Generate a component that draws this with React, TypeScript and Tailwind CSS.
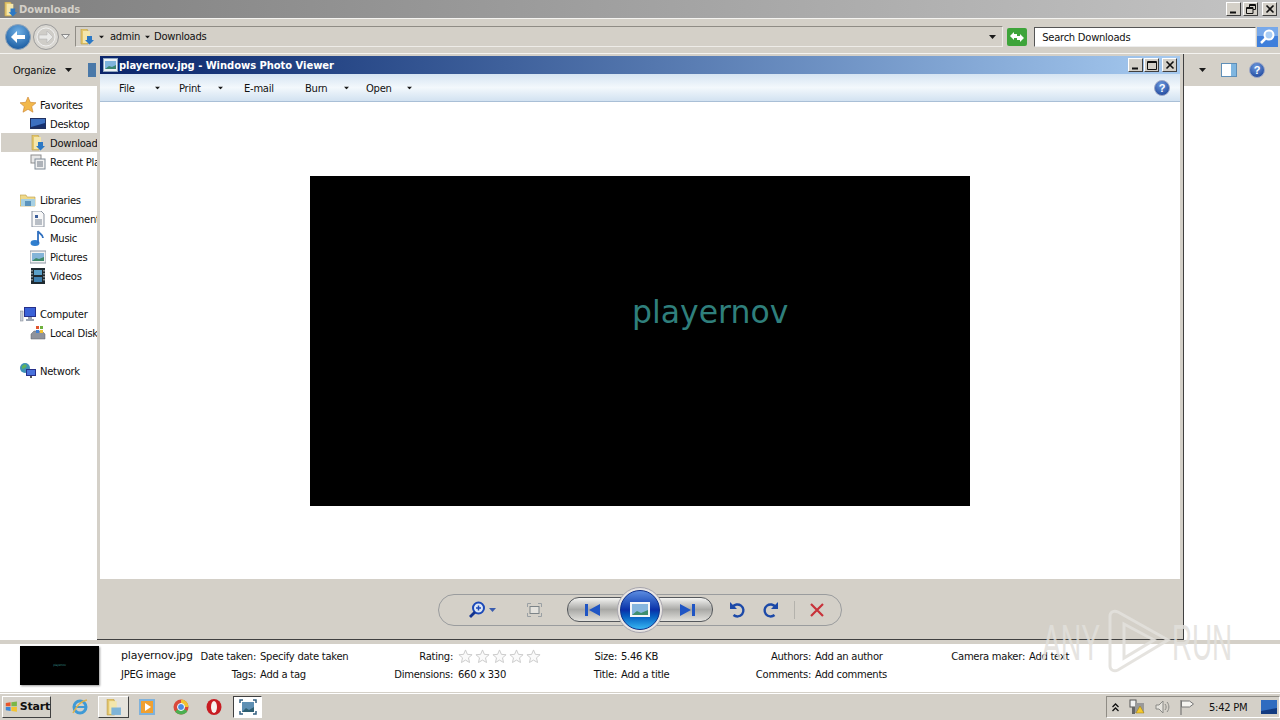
import React from "react";

const FONT = "[font-family:'DejaVu_Sans','Liberation_Sans',sans-serif]";

function Caret({ className = "" }: { className?: string }) {
  return (
    <svg width="7" height="4" viewBox="0 0 7 4" className={className}>
      <path d="M0 0h7L3.500 4z" fill="#1a1a1a" />
    </svg>
  );
}

function FolderIcon({ size = 16, arrow = false }: { size?: number; arrow?: boolean }) {
  return (
    <svg width={size} height={size} viewBox="0 0 16 16">
      <path d="M2 0h6l1 2v13H2z" fill="#e3c66d" stroke="#b99a45" strokeWidth=".6" />
      <path d="M4 2h7v12H4z" fill="#f4e6ab" />
      {arrow ? <path d="M8 7h5v4h2l-4.500 4.500L6 11h2z" fill="#2b78c5" /> : <path d="M6 8h9v7H6z" fill="#7fb4d8" />}
    </svg>
  );
}

function HelpIcon({ size = 16 }: { size?: number }) {
  return (
    <svg width={size} height={size} viewBox="0 0 16 16">
      <defs>
        <radialGradient id="hg" cx=".45" cy=".3" r=".8">
          <stop offset="0" stopColor="#6f9be0" />
          <stop offset="1" stopColor="#173f95" />
        </radialGradient>
      </defs>
      <circle cx="8" cy="8" r="7.500" fill="url(#hg)" stroke="#9fa9c7" />
      <text x="8" y="12" textAnchor="middle" fontSize="11" fontWeight="700" fill="#fff" fontFamily="Liberation Sans">?</text>
    </svg>
  );
}

function SideIcon({ kind }: { kind: string }) {
  const c = { width: 16, height: 16, viewBox: "0 0 16 16" };
  switch (kind) {
    case "star":
      return <svg {...c}><path d="M8 0l2.300 5.300 5.700.5-4.300 3.800 1.300 5.600L8 12.300 3 15.200l1.300-5.600L0 5.800l5.700-.5z" fill="#f2b84b" stroke="#c9802b" strokeWidth=".6" /></svg>;
    case "desktop":
      return <svg {...c}><rect x="0" y="2" width="16" height="11" fill="#20305f" /><rect x="1" y="3" width="14" height="8" fill="#3d70c0" /><path d="M1 11l14-4v4z" fill="#16306f" /></svg>;
    case "downloads":
      return <FolderIcon arrow />;
    case "recent":
      return <svg {...c}><rect x="1" y="1" width="10" height="8" fill="#e8e8e8" stroke="#8d8d8d" /><rect x="5" y="5" width="10" height="10" fill="#f1f1f1" stroke="#7f8a95" /><path d="M7 8h6M7 10h6M7 12h6" stroke="#6a7580" /></svg>;
    case "libraries":
      return <svg {...c}><path d="M0 3h6l1 2h8v9H0z" fill="#efd98a" stroke="#b99a45" strokeWidth=".6" /><path d="M1 7h14v7H1z" fill="#a6cfe2" /><path d="M5 9h6v5H5z" fill="#5b93bd" /></svg>;
    case "documents":
      return <svg {...c}><path d="M2 0h9l3 3v13H2z" fill="#f8f8f8" stroke="#8a93a0" /><path d="M5 4h3v3H5z" fill="#3d5f9a" /><path d="M5 9h7M5 11h7M5 13h7" stroke="#7a8594" /></svg>;
    case "music":
      return <svg {...c}><ellipse cx="5" cy="13" rx="4.500" ry="3" fill="#2f7fcf" /><path d="M8 13V1c1 3 5 3 5 7" stroke="#2f6fbf" strokeWidth="1.800" fill="none" /></svg>;
    case "pictures":
      return <svg {...c}><rect x="0" y="2" width="16" height="12" fill="#f3f3f3" stroke="#8f98a5" /><rect x="2" y="4" width="12" height="8" fill="#84b4d8" /><path d="M2 12l4-3 3 1 5-2v4z" fill="#3f8a6a" /></svg>;
    case "videos":
      return <svg {...c}><rect x="1" y="0" width="14" height="16" fill="#1f2a30" /><rect x="4" y="2" width="8" height="5" fill="#5ba0c8" /><rect x="4" y="9" width="8" height="5" fill="#3f80b0" /><path d="M2 2v12M14 2v12" stroke="#dfe6ea" strokeDasharray="1.500 1.500" /></svg>;
    case "computer":
      return <svg {...c}><rect x="0" y="5" width="3" height="10" fill="#c9ced6" stroke="#7a818c" strokeWidth=".5" /><rect x="4" y="1" width="12" height="10" fill="#26308a" /><rect x="5" y="2" width="10" height="8" fill="#3a62d8" /><path d="M8 11h4v2h2v2H6v-2h2z" fill="#9aa3b2" /></svg>;
    case "disk":
      return <svg {...c}><path d="M1 9l3-3h8l3 3v5H1z" fill="#8f939c" stroke="#5e6169" strokeWidth=".5" /><rect x="6" y="1" width="3" height="3" fill="#e2552d" /><rect x="10" y="1" width="3" height="3" fill="#6fb13d" /><rect x="6" y="5" width="3" height="3" fill="#3f7fd6" /><rect x="10" y="5" width="3" height="3" fill="#f2c230" /></svg>;
    case "network":
      return <svg {...c}><circle cx="5" cy="5" r="5" fill="#3f92b6" /><path d="M2 3l3-2 2 2-2 2-3 1z" fill="#5eb35a" /><rect x="6" y="6" width="10" height="7" fill="#26308a" /><rect x="7" y="7" width="8" height="5" fill="#4a72dc" /><path d="M10 13h2v2h-2z" fill="#555" /></svg>;
  }
  return null;
}

function SideRow({ icon, label, sub, active }: { icon: string; label: string; sub?: boolean; active?: boolean }) {
  return (
    <div className={`flex h-[19px] items-center whitespace-nowrap overflow-hidden ${sub ? "pl-[30px]" : "pl-[20px]"} ${active ? "bg-[#d4d0c8] ml-px" : ""}`}>
      <span className={`flex w-[20px] shrink-0 ${active ? "-ml-px" : ""}`}>
        <SideIcon kind={icon} />
      </span>
      <span className="pt-px">{label}</span>
    </div>
  );
}

function WinBtn({ kind, className = "" }: { kind: "min" | "max" | "restore" | "close"; className?: string }) {
  return (
    <div className={`flex h-[14px] w-[15px] items-center justify-center border border-t-white border-l-white border-r-[#404040] border-b-[#404040] bg-[#d4d0c8] ${className}`}>
      <svg width="10" height="10" viewBox="0 0 10 10">
        {kind === "min" && <path d="M1 7.500h6v2H1z" fill="#111" />}
        {kind === "max" && <path d="M.5 1.500h9v8h-9zM.5 2.500h9" fill="none" stroke="#111" />}
        {kind === "restore" && <path d="M3.500 3V.5h6v5H7M.5 3.500h6.500v6H.5zM.5 4.500H7M3.500 1.500h6" fill="none" stroke="#111" />}
        {kind === "close" && <path d="M1.500 1.500l7 7M8.500 1.500l-7 7" stroke="#111" strokeWidth="1.600" />}
      </svg>
    </div>
  );
}

function MenuItem({ label, textW, total, caret = true }: { label: string; textW: number; total: number; caret?: boolean }) {
  return (
    <div className="flex items-center" style={{ width: total }}>
      <span className="pt-px" style={{ width: textW }}>{label}</span>
      {caret && <Caret className="scale-75" />}
    </div>
  );
}

function Stars() {
  return (
    <div className="flex gap-[2px]">
      {[0, 1, 2, 3, 4].map((i) => (
        <svg key={i} width="15" height="15" viewBox="0 0 16 16">
          <path d="M8 1l2 4.700 5 .4-3.800 3.300 1.100 5L8 11.800l-4.300 2.600 1.100-5L1 6.100l5-.4z" fill="#fafafa" stroke="#c9c9c9" />
        </svg>
      ))}
    </div>
  );
}

function DetailCol({ width, labelW, gap, rows }: { width: number; labelW: number; gap: number; rows: [string, React.ReactNode][] }) {
  return (
    <div className="flex flex-col" style={{ width }}>
      {rows.map(([l, v]) => (
        <div key={l} className="flex h-[18px] items-center whitespace-nowrap">
          <span className="text-right" style={{ width: labelW, marginRight: gap }}>{l}</span>
          {v}
        </div>
      ))}
    </div>
  );
}

function Explorer() {
  return (
    <div className="flex h-[694px] flex-col">
      <div className="flex h-[18px] items-center justify-between bg-gradient-to-r from-[#808080] to-[#c4c4c4] pl-[3px] pr-[3px]">
        <div className="flex items-center gap-[1px] text-[10px] font-bold tracking-[-.06px] text-[#d4d0c8]">
          <FolderIcon size={15} arrow />
          <span className="pt-px">Downloads</span>
        </div>
        <div className="flex">
          <WinBtn kind="min" className="mr-[2px]" />
          <WinBtn kind="restore" className="mr-[4px]" />
          <WinBtn kind="close" />
        </div>
      </div>
      <div className="flex h-[36px] items-center border-y border-[#f4f3f0] bg-[#d4d0c8] pl-[5px] pr-[2px] pt-px">
        <svg width="26" height="26" viewBox="0 0 26 26">
          <defs>
            <radialGradient id="bk" cx=".5" cy=".3" r=".8">
              <stop offset="0" stopColor="#6fb0e6" />
              <stop offset="1" stopColor="#0e4f96" />
            </radialGradient>
          </defs>
          <circle cx="13" cy="13" r="12.500" fill="url(#bk)" stroke="#8fa3b8" />
          <path d="M6 13l6-6v4h8v4h-8v4z" fill="#fff" />
        </svg>
        <svg width="26" height="26" viewBox="0 0 26 26" className="ml-[2px]">
          <circle cx="13" cy="13" r="12.500" fill="#d9d7d2" stroke="#9a9a9a" />
          <circle cx="13" cy="13" r="9" fill="#cfcdc8" stroke="#efefef" />
          <path d="M20 13l-6-6v4H6v4h8v4z" fill="#e9e9e7" stroke="#aeaeae" strokeWidth=".5" />
        </svg>
        <svg width="9" height="6" viewBox="0 0 9 6" className="ml-[2px]">
          <path d="M.5.500h8L4.500 5z" fill="#f2f2f0" stroke="#8a8a8a" />
        </svg>
        <div className="ml-[5px] flex h-[21px] w-[929px] items-center border border-l-[#8f8c85] border-t-[#8f8c85] border-r-[#eeece8] border-b-[#eeece8] pl-[3px]">
          <FolderIcon size={16} arrow />
          <Caret className="ml-[3px] scale-75" />
          <span className="ml-[5px]">admin</span>
          <Caret className="ml-[4px] scale-75" />
          <span className="ml-[3px]">Downloads</span>
          <Caret className="ml-auto mr-[6px]" />
        </div>
        <svg width="20" height="18" viewBox="0 0 20 18" className="ml-[4px]">
          <rect width="20" height="18" rx="2" fill="#3ea43a" />
          <path d="M3 8l4-4v2h3v4H7v2zM17 10l-4 4v-2h-3V8h3V6z" fill="#fff" />
        </svg>
        <div className="ml-[7px] flex h-[20px] w-[222px] items-center border border-l-[#555] border-t-[#555] border-r-[#eee] border-b-[#eee] bg-white pl-[7px] pt-px">Search Downloads</div>
        <svg width="21" height="20" viewBox="0 0 21 20" className="ml-px">
          <rect width="21" height="20" fill="#3f7fdb" />
          <rect width="21" height="9" fill="#78a9ea" />
          <circle cx="12" cy="8" r="4.500" fill="#a9cdf5" stroke="#fff" strokeWidth="2" />
          <path d="M8.500 11.500L4 16" stroke="#fff" strokeWidth="2.500" />
        </svg>
      </div>
      <div className="flex h-[32px] items-center bg-[#d4d0c8] pl-[13px] pr-[15px]">
        <span className="pt-px">Organize</span>
        <Caret className="ml-[9px]" />
        <svg width="8" height="14" viewBox="0 0 8 14" className="ml-[16px]">
          <rect width="8" height="14" fill="#4a78a8" />
        </svg>
        <Caret className="ml-auto" />
        <svg width="16" height="14" viewBox="0 0 16 14" className="ml-[15px]">
          <rect x=".5" y=".5" width="15" height="13" fill="#fff" stroke="#5f8fb8" />
          <rect x="10" y="1" width="5" height="12" fill="#7fb6e0" />
        </svg>
        <span className="ml-[12px] flex"><HelpIcon size={16} /></span>
      </div>
      <div className="flex min-h-0 flex-1 bg-white">
        <div className="w-[97px] overflow-hidden pt-[9px]">
          <SideRow icon="star" label="Favorites" />
          <SideRow icon="desktop" label="Desktop" sub />
          <SideRow icon="downloads" label="Downloads" sub active />
          <SideRow icon="recent" label="Recent Places" sub />
          <div className="h-[19px]" />
          <SideRow icon="libraries" label="Libraries" />
          <SideRow icon="documents" label="Documents" sub />
          <SideRow icon="music" label="Music" sub />
          <SideRow icon="pictures" label="Pictures" sub />
          <SideRow icon="videos" label="Videos" sub />
          <div className="h-[19px]" />
          <SideRow icon="computer" label="Computer" />
          <SideRow icon="disk" label="Local Disk (C:)" sub />
          <div className="h-[19px]" />
          <SideRow icon="network" label="Network" />
        </div>
      </div>
      <div className="h-[4px] bg-[#d4d0c8]" />
      <div className="flex h-[48px] items-start bg-white pt-[3px]">
        <div className="-mt-[1px] ml-[20px] mr-[22px] flex h-[39px] w-[79px] items-center justify-center bg-black text-[3px] text-[#2f7f7c] shadow-[1px_1px_2px_#999]">playernov</div>
        <div className="flex w-[75px] flex-col whitespace-nowrap">
          <span className="flex h-[18px] items-center text-[11px] tracking-[-.2px]">playernov.jpg</span>
          <span className="flex h-[18px] items-center">JPEG image</span>
        </div>
        <DetailCol width={198} labelW={60} gap={4} rows={[["Date taken:", "Specify date taken"], ["Tags:", "Add a tag"]]} />
        <DetailCol width={174} labelW={59} gap={5} rows={[["Rating:", <Stars key="s" />], ["Dimensions:", "660 x 330"]]} />
        <DetailCol width={153} labelW={49} gap={4} rows={[["Size:", "5.46 KB"], ["Title:", "Add a title"]]} />
        <DetailCol width={194} labelW={90} gap={4} rows={[["Authors:", "Add an author"], ["Comments:", "Add comments"]]} />
        <DetailCol width={220} labelW={110} gap={4} rows={[["Camera maker:", "Add text"]]} />
      </div>
      <div className="h-[1px] bg-[#d4d0c8]" />
      <div className="h-[1px] bg-white" />
    </div>
  );
}

function Viewer() {
  return (
    <div className="absolute left-[97px] top-[54px] flex h-[586px] w-[1087px] flex-col border-r border-b border-r-[#404040] border-b-[#404040] bg-[#d4d0c8] pl-[3px] pt-[2px]">
      <div className="mr-[3px] flex h-[18px] shrink-0 items-center justify-between bg-gradient-to-r from-[#0a246a] to-[#a6caf0] pl-[3px] pr-[3px]">
        <div className="flex items-center gap-[1px] text-[10px] font-bold tracking-[-.06px] text-white">
          <svg width="15" height="14" viewBox="0 0 15 14">
            <rect x=".5" y=".5" width="14" height="13" fill="#eef2f6" stroke="#8fa7c0" />
            <rect x="2" y="3" width="11" height="8" fill="#7fb4dd" />
            <path d="M2 11l4-3 3 1 4-2v4z" fill="#3a8670" />
          </svg>
          <span className="pt-px">playernov.jpg - Windows Photo Viewer</span>
        </div>
        <div className="flex">
          <WinBtn kind="min" className="mr-px" />
          <WinBtn kind="max" className="mr-[3px]" />
          <WinBtn kind="close" />
        </div>
      </div>
      <div className="mr-[3px] flex h-[28px] shrink-0 items-center border-b border-[#a9bfd6] bg-gradient-to-b from-[#d5e4f2] via-[#f3f8fc] to-[#d2e2f1] pl-[19px] pr-[10px]">
        <MenuItem label="File" textW={35} total={60} />
        <MenuItem label="Print" textW={38} total={65} />
        <MenuItem label="E-mail" textW={40} total={61} caret={false} />
        <MenuItem label="Burn" textW={38} total={61} />
        <MenuItem label="Open" textW={40} total={60} />
        <span className="ml-auto flex"><HelpIcon size={16} /></span>
      </div>
      <div className="mr-[3px] flex min-h-0 flex-1 items-center justify-center bg-white">
        <div className="h-[330px] w-[660px] bg-black pl-[322px] pt-[116px] tracking-normal">
          <span className="text-[31.5px] leading-[40px] text-[#2f7f7c]">playernov</span>
        </div>
      </div>
      <div className="flex h-[60px] shrink-0 items-center justify-center pr-[3px] pt-px">
        <ToolPill />
      </div>
    </div>
  );
}

function ToolPill() {
  return (
    <div className="relative flex h-[32px] w-[404px] items-center rounded-full border border-[#9a9c9e] pl-[29px]">
      <svg width="18" height="18" viewBox="0 0 18 18">
        <circle cx="10.500" cy="7" r="5.500" fill="#dce7f7" stroke="#1c49b8" strokeWidth="2" />
        <path d="M7 11l-5 5" stroke="#12338f" strokeWidth="2.800" />
        <path d="M8 7h5M10.500 4.500v5" stroke="#1c49b8" strokeWidth="1.500" />
      </svg>
      <svg width="7" height="4" viewBox="0 0 7 4" className="ml-[3px]">
        <path d="M0 0h7L3.500 4z" fill="#3a5cae" />
      </svg>
      <svg width="15" height="14" viewBox="0 0 15 14" className="ml-[31px]">
        <path d="M.5 4V.5H4M11 .5h3.500V4M14.500 10v3.500H11M4 13.500H.5V10" fill="none" stroke="#9aa0a4" />
        <rect x="3" y="3.500" width="9" height="7" fill="#e4e2dd" stroke="#7d8488" />
      </svg>
      <div className="ml-[25px] flex h-[25px] w-[146px] items-center justify-between rounded-[12px] border border-[#55585c] bg-gradient-to-b from-[#f4f4f2] via-[#a9a9a6] to-[#e2e1dd] px-[17px]">
        <svg width="15" height="12" viewBox="0 0 15 12"><path d="M0 0h3v12H0zM15 0v12L4 6z" fill="#1f55c4" /></svg>
        <svg width="15" height="12" viewBox="0 0 15 12"><path d="M15 0h-3v12h3zM0 0v12l11-6z" fill="#1f55c4" /></svg>
      </div>
      <svg width="16" height="18" viewBox="0 0 16 18" className="ml-[16px]">
        <path d="M3.500 6a6 6 0 1 1 1 8" fill="none" stroke="#1c49a8" strokeWidth="2.400" />
        <path d="M1 1v7h7z" fill="#1c49a8" />
      </svg>
      <svg width="16" height="18" viewBox="0 0 16 18" className="ml-[18px]">
        <path d="M12.500 6a6 6 0 1 0-1 8" fill="none" stroke="#1c49a8" strokeWidth="2.400" />
        <path d="M15 1v7H8z" fill="#1c49a8" />
      </svg>
      <div className="ml-[15px] h-[18px] w-px bg-[#b4b2ac]" />
      <svg width="14" height="14" viewBox="0 0 14 14" className="ml-[15px]">
        <path d="M1 1l12 12M13 1L1 13" stroke="#c8323a" strokeWidth="2.200" />
      </svg>
      <div className="absolute left-[178px] top-[-8px] flex h-[46px] w-[46px] items-center justify-center rounded-full border border-[#a7a5ad] bg-[#e9e6e4]">
        <div className="flex h-[40px] w-[40px] items-center justify-center rounded-full border border-[#0c2f8a] bg-gradient-to-b from-[#5c8ce0] via-[#0b2fa8] to-[#38b6f2]">
          <svg width="20" height="15" viewBox="0 0 20 15">
            <rect width="20" height="15" fill="#f4f6f8" />
            <rect x="2" y="2" width="16" height="11" fill="#86b6de" />
            <path d="M2 13l5-4 4 2 7-3v5z" fill="#3f8f6e" />
          </svg>
        </div>
      </div>
    </div>
  );
}

function Taskbar() {
  return (
    <div className="flex h-[26px] items-center bg-[#d4d0c8] pl-[2px]">
      <div className="flex h-[22px] w-[49px] items-center gap-[2px] border border-t-white border-l-white border-r-[#404040] border-b-[#404040] pl-[2px] text-[11px] font-bold tracking-[-.2px]">
        <svg width="16" height="14" viewBox="0 0 16 14">
          <path d="M1 2l6-1v5H1z" fill="#e8562a" />
          <path d="M8 1l7-1v6H8z" fill="#7ab648" />
          <path d="M1 7h6v5l-6-1z" fill="#3d87d6" />
          <path d="M8 7h7v6l-7-1z" fill="#f3c22f" />
        </svg>
        <span>Start</span>
      </div>
      <svg width="18" height="18" viewBox="0 0 18 18" className="ml-[20px]">
        <circle cx="9" cy="9" r="6" fill="none" stroke="#3f9ad6" strokeWidth="3" />
        <path d="M4 9h10" stroke="#3f9ad6" strokeWidth="2" />
        <path d="M2 15C5 9 10 3 16 2" fill="none" stroke="#e0b24a" strokeWidth="1.500" />
      </svg>
      <div className="ml-[9px] flex h-[22px] w-[31px] items-center justify-center border border-t-white border-l-white border-r-[#404040] border-b-[#404040] bg-[#e6e3dc]">
        <FolderIcon size={17} />
      </div>
      <svg width="16" height="16" viewBox="0 0 16 16" className="ml-[10px]">
        <rect width="16" height="16" fill="#7fb2dc" />
        <rect x="2" y="2" width="12" height="12" fill="#f0a030" />
        <path d="M6 4l6 4-6 4z" fill="#fff" />
      </svg>
      <svg width="16" height="16" viewBox="0 0 16 16" className="ml-[18px]">
        <circle cx="8" cy="8" r="7.500" fill="#d9483b" />
        <path d="M8 8L14.500 12A7.500 7.500 0 0 1 2 12.500z" fill="#4caf50" />
        <path d="M8 .5A7.500 7.500 0 0 1 15.500 8H8z" fill="#f2c230" />
        <circle cx="8" cy="8" r="3.500" fill="#4a8be0" stroke="#fff" />
      </svg>
      <svg width="16" height="16" viewBox="0 0 16 16" className="ml-[17px]">
        <ellipse cx="8" cy="8" rx="7.500" ry="8" fill="#c81c22" />
        <ellipse cx="8" cy="8" rx="3" ry="6" fill="#f7f2ef" />
      </svg>
      <div className="ml-[11px] flex h-[22px] w-[29px] items-center justify-center border border-t-[#404040] border-l-[#404040] border-r-white border-b-white bg-white">
        <svg width="18" height="16" viewBox="0 0 18 16">
          <path d="M1 4V1h3M14 1h3v3M17 12v3h-3M4 15H1v-3" fill="none" stroke="#335f80" strokeWidth="1.500" />
          <rect x="3" y="3" width="12" height="10" fill="#5e8fb3" />
          <path d="M3 13l4-4 3 2 5-3v5z" fill="#2e5f72" />
        </svg>
      </div>
      <div className="ml-auto flex h-[22px] w-[174px] items-center border border-t-[#8f8c85] border-l-[#8f8c85] border-r-white border-b-white pl-[5px]">
        <svg width="7" height="9" viewBox="0 0 7 9">
          <path d="M.5 4l3-3 3 3M.5 8l3-3 3 3" fill="none" stroke="#111" strokeWidth="1.300" />
        </svg>
        <svg width="16" height="16" viewBox="0 0 16 16" className="ml-[10px]">
          <rect x="1" y="1" width="6" height="7" fill="#f2f2f2" stroke="#555" />
          <rect x="3" y="8" width="3" height="7" fill="#666" />
          <rect x="6" y="4" width="9" height="10" fill="#999" />
          <path d="M11 7l4 7H7z" fill="#f5c92c" stroke="#9a7a10" strokeWidth=".5" />
        </svg>
        <svg width="15" height="14" viewBox="0 0 15 14" className="ml-[10px]">
          <path d="M1 5h3l4-4v12l-4-4H1z" fill="#e6e4de" stroke="#8a8a86" />
          <path d="M10 4c1.500 2 1.500 4 0 6M12 2c2.500 3 2.500 7 0 10" fill="none" stroke="#8a8a86" />
        </svg>
        <svg width="16" height="16" viewBox="0 0 16 16" className="ml-[9px]">
          <path d="M2 1v15" stroke="#666" />
          <path d="M2.500 2h8l4 3-4 3h-8z" fill="#f5f4f0" stroke="#777" />
        </svg>
        <span className="ml-[14px] whitespace-nowrap">5:42 PM</span>
        <svg width="16" height="14" viewBox="0 0 16 14" className="ml-[14px]">
          <rect width="16" height="14" fill="#2f6cc0" />
          <path d="M0 11l16-3v6H0z" fill="#123a80" />
        </svg>
      </div>
    </div>
  );
}

function Watermark() {
  return (
    <svg width="200" height="70" viewBox="0 0 200 70" className="pointer-events-none absolute left-[1036px] top-[606px]">
      <text x="6" y="54" fontFamily="Liberation Sans" fontSize="50" fill="#e2e0dc" fillOpacity=".85" textLength="58" lengthAdjust="spacingAndGlyphs">ANY</text>
      <text x="136" y="54" fontFamily="Liberation Sans" fontSize="50" fill="#e2e0dc" fillOpacity=".85" textLength="60" lengthAdjust="spacingAndGlyphs">RUN</text>
      <path d="M82 6l50 28-50 30c-4 2-8 0-8-4V10c0-4 4-6 8-4z" fill="none" stroke="#e2e0dc" strokeOpacity=".9" strokeWidth="3" />
      <path d="M88 18l30 16-30 18z" fill="none" stroke="#e2e0dc" strokeOpacity=".9" strokeWidth="3" />
    </svg>
  );
}

export default function App() {
  return (
    <div className={`relative h-[720px] w-[1280px] overflow-hidden bg-white text-[#111] ${FONT} text-[10px] tracking-[-.27px]`}>
      <Explorer />
      <Taskbar />
      <Viewer />
      <Watermark />
    </div>
  );
}
